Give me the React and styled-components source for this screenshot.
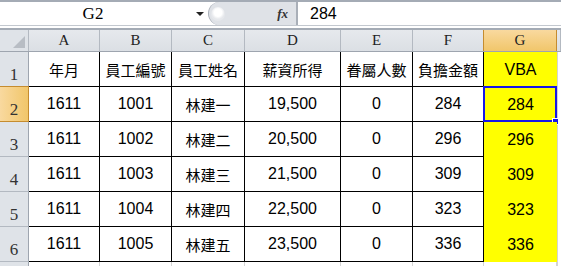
import styled, { createGlobalStyle } from "styled-components";

const GlobalStyle = createGlobalStyle`
  html, body {
    margin: 0;
    padding: 0;
    background: #fff;
    overflow: hidden;
  }
`;

const COLS = "29px 71px 72px 73px 96px 72px 71px 73px 1fr";
const LETTERS = ["A", "B", "C", "D", "E", "F", "G"];

const header = ["年月", "員工編號", "員工姓名", "薪資所得", "眷屬人數", "負擔金額", "VBA"];

const rows = [
  ["1611", "1001", "林建一", "19,500", "0", "284", "284"],
  ["1611", "1002", "林建二", "20,500", "0", "296", "296"],
  ["1611", "1003", "林建三", "21,500", "0", "309", "309"],
  ["1611", "1004", "林建四", "22,500", "0", "323", "323"],
  ["1611", "1005", "林建五", "23,500", "0", "336", "336"],
];

export default function App() {
  return (
    <Page>
      <GlobalStyle />
      <FormulaBar>
        <NameBox>
          <NameText>G2</NameText>
          <DropArrow />
        </NameBox>
        <FxArea>
          <FxKnob />
          <Fx>fx</Fx>
        </FxArea>
        <FormulaInput>284</FormulaInput>
      </FormulaBar>
      <BarGap />

      <Sheet>
        <ColHeaderRow>
          <Corner>
            <CornerTriangle />
          </Corner>
          {LETTERS.map((l) => (
            <ColHeader key={l} $active={l === "G"}>{l}</ColHeader>
          ))}
          <ColHeader $tail />
        </ColHeaderRow>

        <Row>
          <RowHeader>1</RowHeader>
          {header.map((h, i) => (
            <Cell key={i} $vba={i === 6} $cjk={i !== 6}>{h}</Cell>
          ))}
          <TailCell />
        </Row>

        {rows.map((r, ri) => (
          <Row key={ri}>
            <RowHeader $active={ri === 0}>{ri + 2}</RowHeader>
            {r.map((v, i) => (
              <Cell key={i} $vba={i === 6} $cjk={i === 2}>
                {v}
                {ri === 0 && i === 6 && (
                  <Selection>
                    <FillHandle />
                  </Selection>
                )}
              </Cell>
            ))}
            <TailCell />
          </Row>
        ))}

        <Row $short>
          <RowHeader />
          {LETTERS.map((l) => (
            <EmptyCell key={l} />
          ))}
          <TailCell />
        </Row>
      </Sheet>
    </Page>
  );
}

const Page = styled.div`
  width: 561px;
  height: 266px;
  overflow: hidden;
  background: #fff;
  font-family: "Liberation Sans", Arial, sans-serif;
`;

const FormulaBar = styled.div`
  display: flex;
  height: 23px;
  border-top: 2px solid #a4abb5;
  border-bottom: 1px solid #c3c8cf;
  background: #fff;
`;

const NameBox = styled.div`
  position: relative;
  width: 208px;
  display: flex;
  align-items: center;
`;

const NameText = styled.span`
  width: 186px;
  text-align: center;
  font-family: "Liberation Serif", "DejaVu Serif", serif;
  font-size: 17px;
  color: #000;
`;

const DropArrow = styled.span`
  width: 0;
  height: 0;
  border-left: 4px solid transparent;
  border-right: 4px solid transparent;
  border-top: 4px solid #222;
  margin-left: 10px;
`;

const FxArea = styled.div`
  width: 90px;
  display: flex;
  align-items: center;
  justify-content: space-between;
  background: #dfe2e7;
  border-radius: 12px 0 0 12px;
  border-left: 1px solid #a9afb8;
  border-right: 2px solid #a9afb8;
  padding: 0 8px 0 2px;
  box-sizing: border-box;
`;

const FxKnob = styled.span`
  width: 14px;
  height: 14px;
  border-radius: 50%;
  background: radial-gradient(circle at 50% 40%, #fff 0 35%, #e6e8ec 60%);
`;

const Fx = styled.span`
  font-family: "Liberation Serif", "DejaVu Serif", serif;
  font-style: italic;
  font-weight: bold;
  font-size: 13px;
  color: #333;
`;

const FormulaInput = styled.div`
  flex: 1;
  display: flex;
  align-items: center;
  padding-left: 12px;
  font-family: "Liberation Sans", Arial, sans-serif;
  font-size: 16px;
  color: #000;
`;

const BarGap = styled.div`
  height: 2px;
  border-bottom: 2px solid #a4abb5;
`;

const Sheet = styled.div`
  display: flex;
  flex-direction: column;
`;

const ColHeaderRow = styled.div`
  display: grid;
  grid-template-columns: ${COLS};
  height: 21px;
  border-bottom: 1px solid #9ea5af;
`;

const Corner = styled.div`
  position: relative;
  background: #dfe3e8;
  border-right: 1px solid #b3b9c1;
`;

const CornerTriangle = styled.span`
  position: absolute;
  right: 3px;
  bottom: 3px;
  width: 0;
  height: 0;
  border-left: 12px solid transparent;
  border-bottom: 12px solid #b8bdc4;
`;

const ColHeader = styled.div`
  display: flex;
  align-items: center;
  justify-content: center;
  font-family: "Liberation Serif", "DejaVu Serif", serif;
  font-size: 15px;
  color: #222;
  background: ${(p) =>
    p.$active ? "linear-gradient(#f9d99f, #f1c66a)" : "linear-gradient(#e6e9ed, #dbdfe4)"};
  border-right: 1px solid ${(p) => (p.$active ? "#c58c2f" : "#b3b9c1")};
  border-left: ${(p) => (p.$active ? "1px solid #c58c2f" : "none")};
  margin-left: ${(p) => (p.$active ? "-1px" : "0")};
`;

const Row = styled.div`
  display: grid;
  grid-template-columns: ${COLS};
  height: ${(p) => (p.$short ? "6px" : "35px")};
  overflow: ${(p) => (p.$short ? "hidden" : "visible")};
`;

const RowHeader = styled.div`
  display: flex;
  align-items: flex-end;
  justify-content: center;
  padding-bottom: 1px;
  font-family: "Liberation Serif", "DejaVu Serif", serif;
  font-size: 17px;
  color: #333;
  background: ${(p) => (p.$active ? "linear-gradient(90deg, #f9d99f, #f1c66a)" : "#dfe3e8")};
  border-right: 1px solid ${(p) => (p.$active ? "#c58c2f" : "#9ea5af")};
  border-bottom: 1px solid ${(p) => (p.$active ? "#c58c2f" : "#b3b9c1")};
  margin-top: ${(p) => (p.$active ? "-1px" : "0")};
  border-top: ${(p) => (p.$active ? "1px solid #c58c2f" : "none")};
  box-sizing: border-box;
`;

const Cell = styled.div`
  position: relative;
  display: flex;
  align-items: center;
  justify-content: center;
  font-family: ${(p) =>
    p.$cjk
      ? `"Noto Sans CJK TC", "Liberation Sans", sans-serif`
      : `"Liberation Sans", Arial, sans-serif`};
  font-size: ${(p) => (p.$cjk ? "15px" : "16px")};
  color: #000;
  background: ${(p) => (p.$vba ? "#ffff00" : "#fff")};
  border-right: ${(p) => (p.$vba ? "none" : "1px solid #000")};
  border-bottom: ${(p) => (p.$vba ? "none" : "1px solid #000")};
`;

const EmptyCell = styled.div`
  border-right: 1px solid #d4d4d4;
`;

const TailCell = styled.div`
  border-left: 1px solid #d4d4d4;
  background: #fff;
`;

const Selection = styled.div`
  position: absolute;
  left: -1px;
  top: -1px;
  right: 0;
  bottom: -1px;
  border: 2px solid #1616e8;
  border-bottom-width: 3px;
  pointer-events: none;
`;

const FillHandle = styled.span`
  position: absolute;
  right: -4px;
  bottom: -5px;
  width: 5px;
  height: 5px;
  background: #1616e8;
  border: 1px solid #fff;
`;
